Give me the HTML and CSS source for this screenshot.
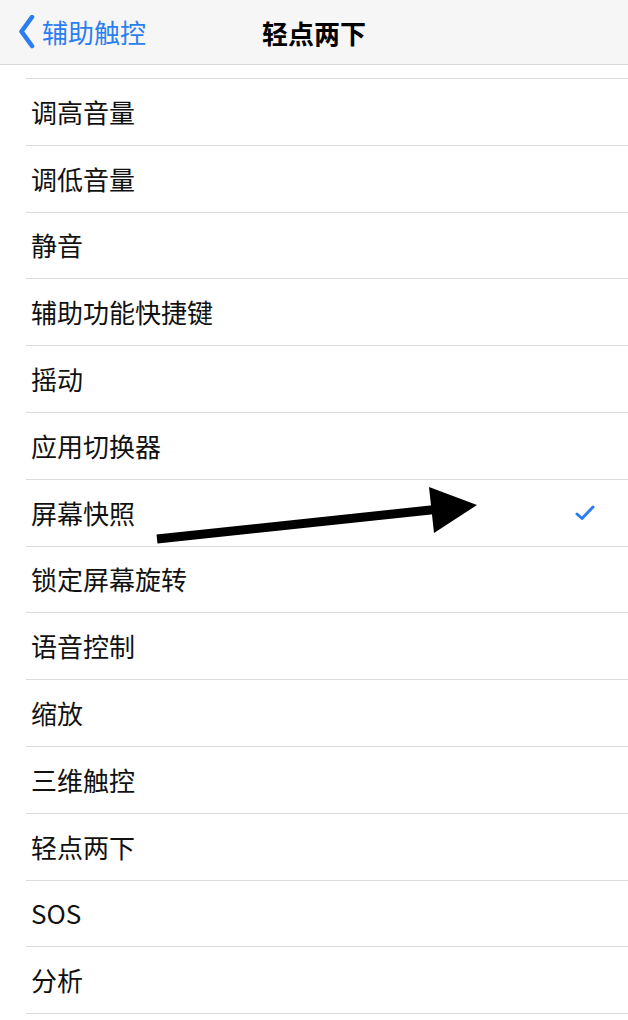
FILE: index.html
```html
<!DOCTYPE html>
<html lang="zh-CN">
<head>
<meta charset="utf-8">
<title>轻点两下</title>
<link rel="stylesheet" href="styles.css">
</head>
<body>
<div class="screen">
  <header class="navbar">
    <a class="back">
      <svg class="chev" width="17" height="34" viewBox="0 0 17 34"><path d="M14 2 L3.5 16.5 L14 31" fill="none" stroke="#2b7ef2" stroke-width="4.6" stroke-linecap="round" stroke-linejoin="round"/></svg>
      <span>辅助触控</span>
    </a>
    <h1 class="title">轻点两下</h1>
  </header>
  <ul class="list">
    <li class="row stub"></li>
    <li class="row"><span>调高音量</span></li>
    <li class="row"><span>调低音量</span></li>
    <li class="row"><span>静音</span></li>
    <li class="row"><span>辅助功能快捷键</span></li>
    <li class="row"><span>摇动</span></li>
    <li class="row"><span>应用切换器</span></li>
    <li class="row"><span>屏幕快照</span>
      <svg class="check" width="22" height="18" viewBox="0 0 22 18"><path d="M3 10 L8 14.5 L19 3" fill="none" stroke="#2b7ef2" stroke-width="3" stroke-linecap="round" stroke-linejoin="round"/></svg>
    </li>
    <li class="row"><span>锁定屏幕旋转</span></li>
    <li class="row"><span>语音控制</span></li>
    <li class="row"><span>缩放</span></li>
    <li class="row"><span>三维触控</span></li>
    <li class="row"><span>轻点两下</span></li>
    <li class="row"><span>SOS</span></li>
    <li class="row"><span>分析</span></li>
  </ul>
  <svg class="arrow" width="628" height="1020" viewBox="0 0 628 1020">
    <line x1="157" y1="539" x2="440" y2="509" stroke="#000" stroke-width="9"/>
    <polygon points="429,487 477,505 434,533" fill="#000"/>
  </svg>
</div>
</body>
</html>
```
FILE: styles.css
```css
html, body {
  margin: 0;
  padding: 0;
  background: #fff;
}
.screen {
  position: relative;
  width: 628px;
  height: 1020px;
  overflow: hidden;
  font-family: "Noto Sans CJK SC", "Noto Sans", sans-serif;
  color: #111;
}
.navbar {
  position: relative;
  height: 64px;
  background: #f6f6f6;
  border-bottom: 1px solid #d8d8d8;
  display: flex;
  align-items: center;
}
.back {
  display: flex;
  align-items: center;
  gap: 7px;
  padding-left: 18px;
  color: #2b7ef2;
  font-size: 26px;
  line-height: 1;
}
.chev {
  display: block;
}
.title {
  position: absolute;
  left: 0;
  right: 0;
  top: 0;
  height: 64px;
  margin: 0;
  display: flex;
  align-items: center;
  justify-content: center;
  font-size: 26px;
  font-weight: 700;
  color: #000;
  pointer-events: none;
}
.list {
  list-style: none;
  margin: 0;
  padding: 0;
}
.row {
  box-sizing: border-box;
  height: 66.8px;
  margin-left: 26px;
  padding-left: 5px;
  padding-right: 32px;
  border-bottom: 1px solid #dcdcdc;
  display: flex;
  align-items: center;
  justify-content: space-between;
  font-size: 26px;
  line-height: 1;
}
.row.stub {
  height: 14px;
}
.check {
  display: block;
}
.arrow {
  position: absolute;
  left: 0;
  top: 0;
  pointer-events: none;
}
```
